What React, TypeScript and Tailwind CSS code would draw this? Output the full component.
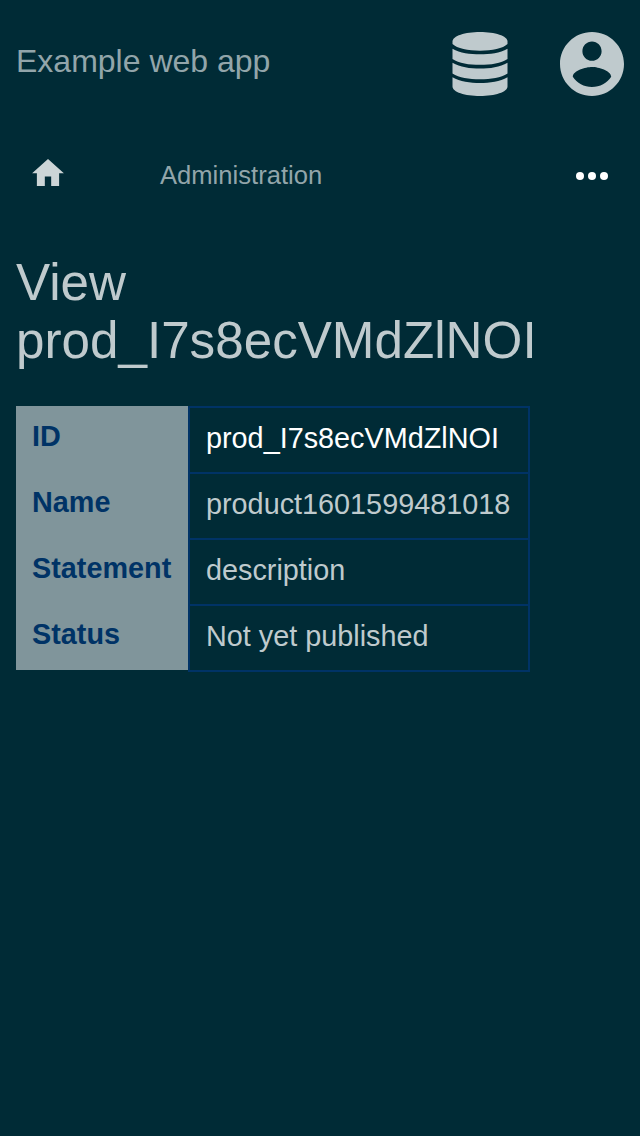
import React from "react";

const rows = [
  { label: "ID", value: "prod_I7s8ecVMdZlNOI", color: "text-white" },
  { label: "Name", value: "product1601599481018", color: "text-[#bfcacd]" },
  { label: "Statement", value: "description", color: "text-[#bfcacd]" },
  { label: "Status", value: "Not yet published", color: "text-[#bfcacd]" },
];

export default function App() {
  return (
    <div className="min-h-[1136px] w-[640px] bg-[#002b36] font-['Liberation_Sans',sans-serif] text-[#bfcacd]">
      <header className="flex h-32 items-center justify-between px-4">
        <div className="pb-1.5 text-[32px] leading-10 text-[#92a5aa]">Example web app</div>
        <div className="flex gap-12">
          <svg className="h-16 w-16" viewBox="0 0 64 64" fill="#bfcacd">
            <path d="M4.500 9.500C4.500 4 17 0 32 0s27.500 4 27.500 9.500v2.500C55 16.500 44 18.700 32 18.700S9 16.500 4.500 12Z" />
            <path d="M4.500 16.700C12 21 22 22.300 32 22.300s20-1.300 27.500-5.600V27C53 31.500 43 32.800 32 32.800S11 31.500 4.500 27Z" />
            <path d="M4.500 30.800C12 35.200 22 36.600 32 36.600s20-1.400 27.500-5.800V41.500C53 45.800 43 47.200 32 47.200S11 45.800 4.500 41.500Z" />
            <path d="M4.500 45.200C12 49.500 22 50.900 32 50.900s20-1.400 27.500-5.700V54.500C59.500 60 47 64 32 64S4.500 60 4.500 54.500Z" />
          </svg>
          <svg className="h-16 w-16" viewBox="2 2 20 20" fill="#bfcacd">
            <path d="M12 2C6.480 2 2 6.480 2 12s4.480 10 10 10 10-4.480 10-10S17.520 2 12 2zm0 3c1.660 0 3 1.340 3 3s-1.340 3-3 3-3-1.340-3-3 1.340-3 3-3zm0 14.200c-2.500 0-4.710-1.280-6-3.220.030-1.990 4-3.080 6-3.080 1.990 0 5.970 1.090 6 3.080-1.290 1.940-3.500 3.220-6 3.220z" />
          </svg>
        </div>
      </header>
      <nav className="flex h-24 items-center px-8">
        <svg className="mb-2 h-[27px] w-8" viewBox="2 3 20 17" fill="#ccd5d7"><path d="M10 20v-6h4v6h5v-8h3L12 3 2 12h3v8z" /></svg>
        <span className="ml-24 pb-0.5 text-[25.600px] leading-8 text-[#92a5aa]">Administration</span>
        <svg className="ml-auto h-8 w-8" viewBox="0 0 32 32" fill="white"><circle cx="4" cy="16" r="4" /><circle cx="16" cy="16" r="4" /><circle cx="28" cy="16" r="4" /></svg>
      </nav>
      <main className="px-4 pt-[30px]">
        <h1 className="text-[51.200px] leading-[58px]">View<br />prod_I7s8ecVMdZlNOI</h1>
        <dl className="mt-9 grid w-[514px] grid-cols-[172px_342px] text-[28.800px] leading-8">
          {rows.map((row) => (
            <React.Fragment key={row.label}>
              <dt className="h-[66px] bg-[#80959b] pl-4 pt-[14px] font-bold text-[#003366]">{row.label}</dt>
              <dd className={`-mb-0.5 h-[68px] border-2 border-[#003366] pl-4 pt-[14px] ${row.color}`}>{row.value}</dd>
            </React.Fragment>
          ))}
        </dl>
      </main>
    </div>
  );
}
